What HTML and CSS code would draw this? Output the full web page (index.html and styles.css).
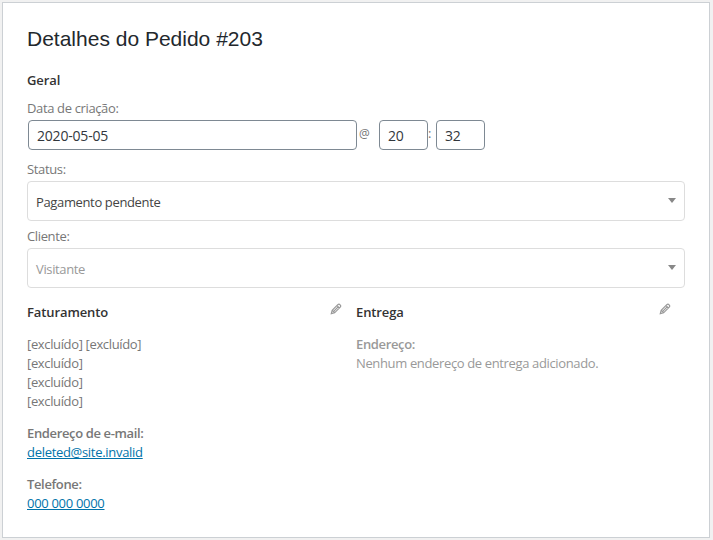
FILE: index.html
```
<!DOCTYPE html>
<html lang="pt-BR">
<head>
    <meta charset="UTF-8">
    <meta name="viewport" content="width=device-width, initial-scale=1.0">
    <title>Detalhes do Pedido</title>
    <link rel="stylesheet" href="styles.css">
</head>
<body>

<div class="order-data">
    <h2>Detalhes do Pedido #203</h2>

    <h3 class="general-title">Geral</h3>
    <label for="orderDate">Data de criação:</label>
    <div class="date-row">
        <input type="text" class="date" id="orderDate" value="2020-05-05">
        <span class="at">@</span>
        <input type="text" class="time" value="20">
        <span class="colon">:</span>
        <input type="text" class="time" value="32">
    </div>

    <label class="status-label">Status:</label>
    <div class="select"><span>Pagamento pendente</span><i class="arrow"></i></div>

    <label class="customer-label">Cliente:</label>
    <div class="select placeholder"><span>Visitante</span><i class="arrow"></i></div>

    <div class="columns">
        <div class="column">
            <div class="column-head">
                <h3>Faturamento</h3>
                <svg class="edit" viewBox="0 0 12 12"><path d="M1.300 10.700l.9-3.400 5.600-5.600q1.200-1 2.300.1 1.200 1.200.1 2.400L4.600 9.800zM2.300 7.300l2.400 2.400M7 2.600l2.400 2.400M3.900 8.100l4.200-4.200"/></svg>
            </div>
            <p>[excluído] [excluído]<br>[excluído]<br>[excluído]<br>[excluído]</p>
            <p><strong>Endereço de e-mail:</strong><br><a href="mailto:deleted@site.invalid">deleted@site.invalid</a></p>
            <p><strong>Telefone:</strong><br><a href="tel:0000000000">000 000 0000</a></p>
        </div>
        <div class="column shipping">
            <div class="column-head">
                <h3>Entrega</h3>
                <svg class="edit" viewBox="0 0 12 12"><path d="M1.300 10.700l.9-3.400 5.600-5.600q1.200-1 2.300.1 1.200 1.200.1 2.400L4.600 9.800zM2.300 7.300l2.400 2.400M7 2.600l2.400 2.400M3.900 8.100l4.200-4.200"/></svg>
            </div>
            <p><strong>Endereço:</strong><br>Nenhum endereço de entrega adicionado.</p>
        </div>
    </div>
</div>

</body>
</html>
```
FILE: styles.css
```
* {
    box-sizing: border-box;
}
body {
    margin: 0;
    padding: 2px 3px 2px 2px;
    background: #f1f1f1;
    font-family: "Open Sans", "Noto Sans", sans-serif;
    font-size: 13px;
    line-height: 19px;
    letter-spacing: -0.36px;
    color: #777;
}
.order-data {
    height: 536px;
    padding: 23px 24px 24px;
    border: 1px solid #ccd0d4;
    background: #fff;
}
h2 {
    margin: 0;
    font-family: "Liberation Sans", Arial, sans-serif;
    font-size: 21px;
    font-weight: 400;
    line-height: 25px;
    letter-spacing: 0;
    color: #23282d;
}
h3 {
    margin: 0;
    font-size: 13px;
    font-weight: 600;
    line-height: 20px;
    letter-spacing: -0.1px;
    color: #333;
}
.general-title {
    margin: 19px 0 9px;
}
label {
    display: block;
    height: 20px;
}
.date-row {
    display: flex;
    height: 32px;
    padding: 1px;
}
input {
    height: 30px;
    margin: 0;
    padding: 0 8px;
    border: 1px solid #7e8993;
    border-radius: 4px;
    background: #fff;
    color: #32373c;
    font: inherit;
    font-size: 14px;
    letter-spacing: -0.2px;
}
.date {
    width: 329px;
}
.time {
    width: 49px;
}
.at {
    width: 22px;
    padding: 4px 0 0 2px;
    font-size: 12px;
}
.colon {
    width: 8px;
    padding-top: 4px;
}
.status-label {
    margin-top: 9px;
    height: 21px;
}
.customer-label {
    margin-top: 6px;
    height: 21px;
}
.select {
    display: flex;
    justify-content: space-between;
    height: 40px;
    padding: 11px 8px 0;
    border: 1px solid #ddd;
    border-radius: 4px;
    color: #444;
}
.placeholder {
    color: #999;
}
.arrow {
    height: 5px;
    margin-top: 5px;
    border: solid transparent;
    border-color: #888 transparent transparent;
    border-width: 5px 4px 0;
}
.columns {
    display: flex;
    margin-top: 14px;
}
.column {
    width: 329px;
}
.column-head {
    display: flex;
    justify-content: space-between;
    padding-right: 14px;
}
.edit {
    width: 12px;
    height: 12px;
    margin-top: 1px;
    fill: none;
    stroke: #999;
    stroke-width: 1.2;
}
p {
    margin: 13px 0 0;
}
strong {
    font-weight: 600;
}
a {
    color: #0073aa;
    letter-spacing: -0.3px;
}
.shipping p {
    color: #999;
}
```
